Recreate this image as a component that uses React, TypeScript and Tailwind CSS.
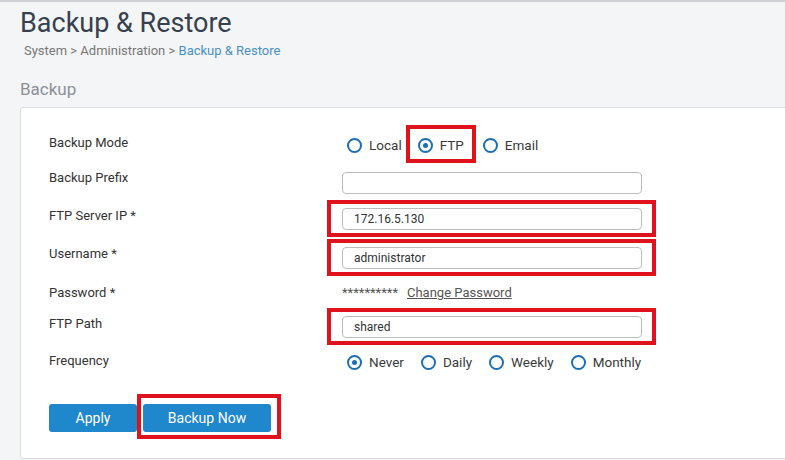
import React from "react";

const font = { fontFamily: "Roboto, 'Noto Sans', Arial, sans-serif" };

function Radio({ label, checked }: { label: string; checked?: boolean }) {
  return (
    <span className="flex items-center gap-[7px]">
      <span className="w-[15px] h-[15px] rounded-full border-[2.5px] border-[#1b6fb5] flex items-center justify-center bg-white">
        {checked && <span className="w-[5px] h-[5px] rounded-full bg-[#1b6fb5]" />}
      </span>
      <span className="text-[13.5px] text-[#3a3a3a]">{label}</span>
    </span>
  );
}

function RedBox({ className }: { className: string }) {
  return <span className={"absolute border-[4px] border-[#e0121d] pointer-events-none " + className} />;
}

function Input({ value, boxed }: { value?: string; boxed?: boolean }) {
  return (
    <div className="relative w-[300px] h-[22px]">
      <div className="w-full h-full rounded-[4px] border border-[#bdbdbd] bg-white flex items-center pl-[11px] text-[12px] text-[#333]">
        {value}
      </div>
      {boxed && <RedBox className="-left-[15px] -right-[14px] -top-[8px] -bottom-[7px]" />}
    </div>
  );
}

function Row({ label, h, children, labelOffset = 0 }: { label: string; h: string; children: React.ReactNode; labelOffset?: number }) {
  return (
    <div className={"flex items-center " + h}>
      <div className="w-[293px] text-[13px] text-[#333]" style={{ marginTop: labelOffset }}>{label}</div>
      <div className="flex items-center">{children}</div>
    </div>
  );
}

export default function App() {
  return (
    <div className="w-[785px] h-[460px] overflow-hidden bg-[#f4f5f7] border-t-2 border-[#cfd1d4]" style={font}>
      <div className="pl-[20px] pt-[4px]">
        <h1 className="text-[27px] leading-[34px] text-[#37404d]">Backup &amp; Restore</h1>
        <div className="mt-[1px] ml-[4px] text-[13px] text-[#777]">
          System &gt; Administration &gt; <span className="text-[#4a90c4]">Backup &amp; Restore</span>
        </div>
        <div className="mt-[16px] text-[17px] text-[#8b9097]">Backup</div>
      </div>
      <div className="ml-[20px] mt-[5px] w-[800px] h-[352px] bg-white border border-[#dcdde0] rounded-[3px] pl-[28px] pt-[20px]">
        <Row label="Backup Mode" h="h-[34px]" labelOffset={-4}>
          <div className="flex items-center ml-[5px]">
            <Radio label="Local" />
            <span className="relative ml-[16px]">
              <Radio label="FTP" checked />
              <RedBox className="-left-[12px] -right-[12px] -top-[10px] -bottom-[8px]" />
            </span>
            <span className="ml-[19px]">
              <Radio label="Email" />
            </span>
          </div>
        </Row>
        <Row label="Backup Prefix" h="h-[38px]" labelOffset={-6}>
          <div className="mt-[3px]">
            <Input />
          </div>
        </Row>
        <Row label="FTP Server IP *" h="h-[38px]" labelOffset={-6}>
          <Input value="172.16.5.130" boxed />
        </Row>
        <Row label="Username *" h="h-[38px]" labelOffset={-6}>
          <div className="mt-[2px]">
            <Input value="administrator" boxed />
          </div>
        </Row>
        <Row label="Password *" h="h-[33px]">
          <div className="flex items-center">
            <span className="text-[13px] text-[#555]">**********</span>
            <span className="ml-[9px] text-[13px] text-[#555] underline">Change Password</span>
          </div>
        </Row>
        <Row label="FTP Path" h="h-[35px]" labelOffset={-6}>
          <Input value="shared" boxed />
        </Row>
        <Row label="Frequency" h="h-[36px]" labelOffset={-3}>
          <div className="flex items-center ml-[5px] gap-[17px]">
            <Radio label="Never" checked />
            <Radio label="Daily" />
            <Radio label="Weekly" />
            <Radio label="Monthly" />
          </div>
        </Row>
        <div className="flex items-center mt-[24px]">
          <button className="w-[88px] h-[28px] rounded-[3px] bg-[#1f87cc] text-white text-[14px]">Apply</button>
          <span className="relative ml-[6px]">
            <button className="w-[128px] h-[28px] rounded-[3px] bg-[#1f87cc] text-white text-[14px]">Backup Now</button>
            <RedBox className="-left-[6px] -right-[10px] -top-[10px] -bottom-[7px]" />
          </span>
        </div>
      </div>
    </div>
  );
}
